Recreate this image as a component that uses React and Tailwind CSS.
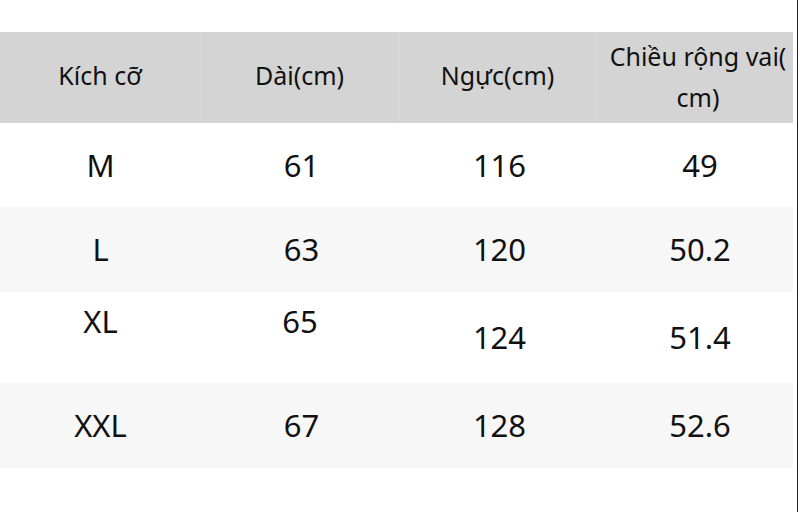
import React from "react";

const rows = [
  { cells: ["M", "61", "116", "49"], bg: "bg-white", h: "h-[84px]" },
  { cells: ["L", "63", "120", "50.2"], bg: "bg-[#f7f7f7]", h: "h-[85px]" },
  { cells: ["XL", "65", "124", "51.4"], bg: "bg-white", h: "h-[91px]", top: [0, 1] },
  { cells: ["XXL", "67", "128", "52.6"], bg: "bg-[#f7f7f7]", h: "h-[85px]" },
];

export default function App() {
  return (
    <div
      className="w-[800px] h-[512px] bg-white flex text-[#111]"
      style={{ fontFamily: '"Noto Sans", "Open Sans", sans-serif' }}
    >
      <div className="w-[793px] flex flex-col pt-[32px]">
        <div className="grid grid-cols-[201px_198px_198px_196px] h-[91px] bg-[#d4d4d4] text-[25px]">
          <div className="flex items-center justify-center border-r border-[#dadada] pb-[3px]">Kích cỡ</div>
          <div className="flex items-center justify-center border-r border-[#d8d8d8] pb-[3px]">Dài(cm)</div>
          <div className="flex items-center justify-center border-r border-[#dadada] pb-[3px]">Ngực(cm)</div>
          <div className="flex items-center justify-center text-center leading-[41px] pl-[6px] pb-[2px]">
            Chiều rộng vai(
            <br />
            cm)
          </div>
        </div>
        {rows.map((r, i) => (
          <div key={i} className={`grid grid-cols-[201px_198px_198px_196px] ${r.bg} ${r.h} text-[31px]`}>
            {r.cells.map((c, j) =>
              r.top && r.top.includes(j) ? (
                <div key={j} className="flex justify-center pt-[6px]">
                  {c}
                </div>
              ) : (
                <div key={j} className={`flex items-center justify-center ${j === 3 ? "pl-[10px]" : ""} ${j > 0 && j < 3 ? "pl-[3px]" : ""}`}>
                  {c}
                </div>
              )
            )}
          </div>
        ))}
      </div>
      <div className="w-[4px]" />
      <div className="w-[1px] h-full bg-[#222]" />
    </div>
  );
}
